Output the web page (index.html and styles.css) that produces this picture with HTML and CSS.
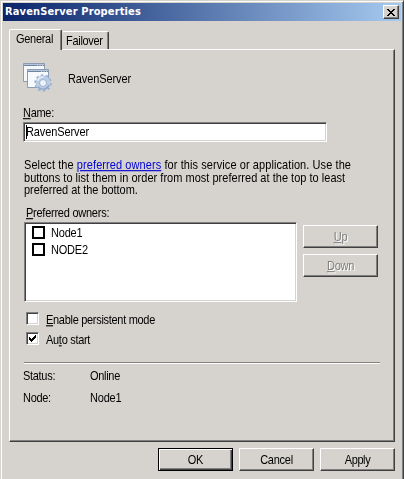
FILE: index.html
```html
<!DOCTYPE html>
<html lang="en">
<head>
<meta charset="utf-8">
<title>RavenServer Properties</title>
<link rel="stylesheet" href="styles.css">
</head>
<body>
<main class="window">
  <header class="titlebar">
    <h1 class="title">RavenServer Properties</h1>
    <button class="close" aria-label="Close"><svg width="8" height="7" viewBox="0 0 8 7" shape-rendering="crispEdges"><path d="M0 0h2v1h1v1h2V1h1V0h2v1H7v1H6v1H5v1h1v1h1v1h1v1H6V6H5V5H3v1H2v1H0V6h1V5h1V4h1V3H2V2H1V1H0z"/></svg></button>
  </header>
  <nav class="tabs">
    <div class="tab tab-active"><span>General</span></div>
    <div class="tab tab-rest"><span>Failover</span></div>
  </nav>
  <section class="panel">
    <div class="identity">
      <svg class="app-icon" width="30" height="31" viewBox="0 0 30 31">
        <path d="M.5.5h21v18H.5z" fill="#f5f8fb" stroke="#8b9bb3"/>
        <path d="M1 1h20v2H1z" fill="#b7c5d8"/>
        <path d="M1 2.500h13M15 2.500h1.500M17.500 2.500h1.500M20 2.500h1" stroke="#71849f"/>
        <path d="M4.500 6.500h21v18h-21z" fill="#f7fafc" stroke="#8b9bb3"/>
        <path d="M5 7h20v2H5z" fill="#b7c5d8"/>
        <path d="M5 8.500h13M19 8.500h1.500M21.500 8.500h1.500M24 8.500h1" stroke="#71849f"/>
        <circle cx="20" cy="20" r="7.600" fill="none" stroke="#91a9c8" stroke-width="2.200" stroke-dasharray="2.400 2.376"/>
        <circle cx="20" cy="20" r="5.400" fill="none" stroke="#b9cce4" stroke-width="4.200"/>
        <circle cx="20" cy="20" r="3.500" fill="#edf4f9" stroke="#8ba4c5" stroke-width=".8"/>
        <path d="M15 24a6.500 6.500 0 0 0 11-2" fill="none" stroke="#8aa3c6" stroke-width="1.200"/>
        <path d="M14.500 18a6 6 0 0 1 6-4" fill="none" stroke="#e2edf8" stroke-width="1.500"/>
      </svg>
      <span class="server">RavenServer</span>
    </div>
    <label class="name-label"><span><u>N</u>ame:</span></label>
    <div class="field"><i class="caret"></i><span class="server">RavenServer</span></div>
    <p class="help">
      <span class="l1">Select the <a>preferred owners</a> for this service or application. Use the</span>
      <span class="l2">buttons to list them in order from most preferred at the top to least</span>
      <span class="l3">preferred at the bottom.</span>
    </p>
    <div class="owners-label"><span><u>P</u>referred owners:</span></div>
    <div class="owners">
      <div class="list">
        <div class="item"><i class="box"></i><span>Node1</span></div>
        <div class="item"><i class="box"></i><span>NODE2</span></div>
      </div>
      <div class="order">
        <button class="button disabled"><span><u>U</u>p</span></button>
        <button class="button disabled"><span><u>D</u>own</span></button>
      </div>
    </div>
    <div class="options">
      <label class="option"><i class="check"></i><span><u>E</u>nable persistent mode</span></label>
      <label class="option"><i class="check"><svg width="7" height="7" viewBox="0 0 7 7" shape-rendering="crispEdges"><path d="M0 2h1v1h1v1h1V3h1V2h1V1h1V0h1v3H6v1H5v1H4v1H3v1H2V6H1V5H0z"/></svg></i><span>Au<u>t</u>o start</span></label>
    </div>
    <div class="rule"></div>
    <div class="facts">
      <span>Status:</span><span>Online</span>
      <span>Node:</span><span class="node">Node1</span>
    </div>
  </section>
  <footer class="actions">
    <button class="button default"><span>OK</span></button>
    <button class="button"><span>Cancel</span></button>
    <button class="button"><span class="apply">Apply</span></button>
  </footer>
</main>
</body>
</html>
```
FILE: styles.css
```css
* { box-sizing: border-box; }
body { margin: 0; overflow: hidden; }
.window {
  width: 404px; height: 479px; padding: 2px 1px 0 2px;
  background: #d6d3ce; color: #000;
  border-top: 1px solid #d6d3ce; border-left: 1px solid #d6d3ce;
  border-right: 1px solid #404040;
  box-shadow: inset 1px 1px #fff, inset -1px 0 #808080;
  font: 11px/14px "Liberation Sans", Arial, sans-serif;
  letter-spacing: -.3px;
}
button { font: inherit; letter-spacing: -.25px; color: inherit; padding: 0; }
/* narrow, tall letterforms of the dialog font */
span { display: inline-block; white-space: nowrap; transform: scaleY(1.12); transform-origin: 0 11px; }
.titlebar {
  height: 18px; display: flex; align-items: center; justify-content: space-between;
  padding: 0 2px 0 2px; margin-right: 1px;
  background: linear-gradient(90deg, #0a246a, #a6caf0);
}
.title { margin: 0; color: #fff; font: bold 11px/18px "DejaVu Sans Condensed", "DejaVu Sans", sans-serif; letter-spacing: .13px; white-space: nowrap; }
.close {
  width: 16px; height: 14px; display: flex; align-items: center; justify-content: center;
  background: #d6d3ce; border: 1px solid; border-color: #fff #404040 #404040 #fff;
  box-shadow: inset -1px -1px #808080;
}
.tabs { display: flex; align-items: flex-end; height: 28px; margin-left: 6px; }
.tab {
  border: 1px solid #fff; border-bottom: 0; border-right-color: #404040;
  border-radius: 2px 2px 0 0; box-shadow: inset -1px 0 #808080; background: #d6d3ce;
}
.tab-active { width: 53px; height: 21px; margin-bottom: -1px; padding: 2px 0 0 6px; z-index: 1; }
.tab-rest { width: 47px; height: 18px; padding: 2px 0 0 4px; border-left: 0; }
.panel {
  width: 386px; height: 393px; margin-left: 6px; padding: 13px 0 0 14px;
  border: 1px solid; border-color: #fff #404040 #404040 #fff;
  box-shadow: inset -1px -1px #808080;
}
.identity { height: 31px; display: flex; align-items: center; gap: 15px; margin-left: -1px; }
.server { letter-spacing: -.1px; }
.name-label { display: block; height: 28px; padding-top: 12px; margin-left: -1px; }
.field {
  display: flex; align-items: center; width: 304px; height: 20px; margin-left: -1px; padding-left: 1px;
  background: #fff; border: 1px solid; border-color: #808080 #fff #fff #808080;
  box-shadow: inset 1px 1px #404040, inset -1px -1px #d6d3ce;
}
.caret { width: 1px; height: 14px; background: #000; margin: 0 -1px 0 1px; }
.help { margin: 17px 0 0; height: 38px; line-height: 12.5px; }
.help span { display: block; transform-origin: 0 10px; }
.help a { color: #0000d8; text-decoration: underline; }
.l1 { letter-spacing: .08px; }
.l2 { letter-spacing: .02px; }
.l3 { letter-spacing: -.05px; }
.owners-label { height: 25px; padding: 9px 0 0 2px; letter-spacing: -.25px; }
.owners { display: flex; gap: 6px; }
.list {
  width: 273px; height: 80px; padding: 3px 0 0 7px;
  background: #fff; border: 1px solid; border-color: #808080 #fff #fff #808080;
  box-shadow: inset 1px 1px #404040, inset -1px -1px #d6d3ce;
  letter-spacing: -.2px;
}
.item { display: flex; align-items: flex-start; gap: 6px; height: 17px; }
.box { width: 13px; height: 13px; border: 2px solid #000; }
.order { display: flex; flex-direction: column; gap: 6px; padding-top: 3px; }
.button {
  width: 75px; height: 23px; display: flex; align-items: center; justify-content: center;
  background: #d6d3ce; border: 1px solid; border-color: #fff #404040 #404040 #fff;
  box-shadow: inset -1px -1px #808080;
}
.disabled { color: #808080; text-shadow: 1px 1px #fff; }
.options { display: grid; gap: 7px; padding: 10px 0 0 2px; }
.option { display: flex; align-items: center; gap: 7px; height: 13px; }
.option span { padding-top: 2px; transform-origin: 0 12px; }
.check {
  width: 13px; height: 13px; display: flex; align-items: center; justify-content: center;
  background: #fff; border: 1px solid; border-color: #808080 #fff #fff #808080;
  box-shadow: inset 1px 1px #404040, inset -1px -1px #d6d3ce;
}
.rule { width: 356px; height: 2px; margin-top: 17px; border-top: 1px solid #808080; border-bottom: 1px solid #fff; }
.facts { display: grid; grid-template-columns: 67px 100px; grid-auto-rows: 14px; row-gap: 8px; margin: 5px 0 0 -1px; }
.node { letter-spacing: -.2px; }
.actions { display: flex; justify-content: flex-end; gap: 6px; padding: 6px 7px 0 0; }
.apply { letter-spacing: -.4px; }
.default { border-color: #000; box-shadow: inset 1px 1px #fff, inset -1px -1px #404040, inset -2px -2px #808080; }
```
